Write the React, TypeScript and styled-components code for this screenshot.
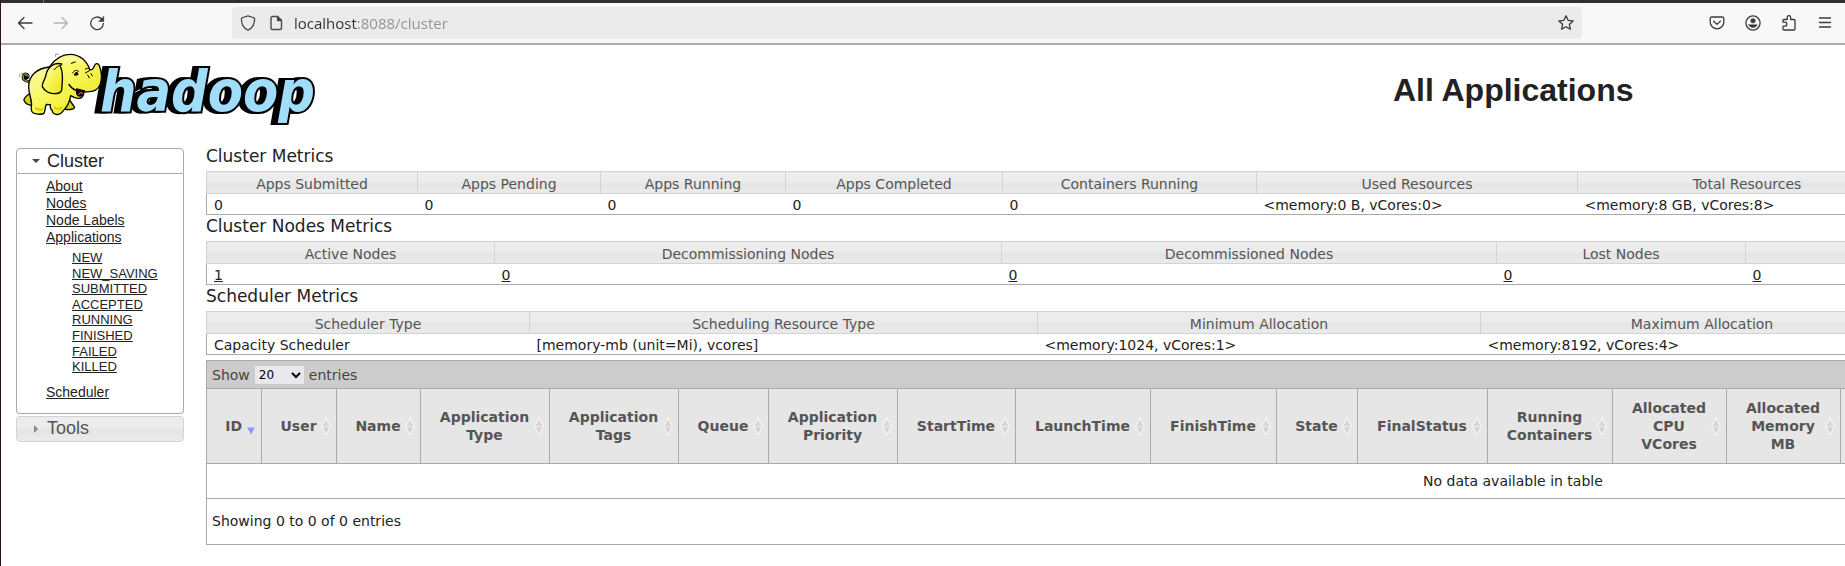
import React from "react";
import styled, { createGlobalStyle, css } from "styled-components";

const Global = createGlobalStyle`
  * { box-sizing: border-box; }
  body {
    margin: 0;
    background: #fff;
    color: #222;
    font-family: "DejaVu Sans", sans-serif;
    font-size: 14px;
    overflow: hidden;
  }
  a { color: inherit; }
`;

const Window = styled.div`
  min-height: 100vh;
  border-left: 1px solid #2c1226;
  overflow: hidden;
`;

/* ---------- browser toolbar ---------- */

const TabStrip = styled.div`
  height: 3px;
  padding-left: 42px;
  background: #302e2f;
`;

const TabDivider = styled.div`
  width: 1px;
  height: 3px;
  background: #777;
`;

const Toolbar = styled.nav`
  display: flex;
  align-items: center;
  height: 42px;
  padding: 0 4px 0 8px;
  background: #f8f8f8;
  border-bottom: 2px solid #ababab;
`;

const IconButton = styled.button<{ $faded?: boolean }>`
  display: grid;
  place-items: center;
  flex: none;
  width: 32px;
  height: 32px;
  padding: 0;
  border: 0;
  background: none;
  color: ${(p) => (p.$faded ? "#b4b4b4" : "#3a3a3a")};
`;

const ToolGroup = styled.div`
  display: flex;
  gap: 4px;
`;

const AddressBar = styled.div`
  display: flex;
  align-items: center;
  flex: 1;
  height: 32px;
  margin: 0 119px;
  background: #ebebeb;
  border-radius: 4px;
  color: #4a4a4a;
`;

const AddressBadge = styled.span`
  display: grid;
  place-items: center;
  width: 28px;
  &:first-child { margin-left: 2px; }
`;

const AddressInput = styled.input`
  flex: 1;
  min-width: 0;
  height: 32px;
  padding: 0 0 0 4px;
  border: 0;
  outline: 0;
  font: 15px "Open Sans", sans-serif;
  color: transparent;
  background: linear-gradient(90deg, #303030 67px, #919191 67px);
  background-clip: text;
  -webkit-background-clip: text;
`;

const Icon = ({ children, size = 16 }: { children: React.ReactNode; size?: number }) => (
  <svg
    width={size}
    height={size}
    viewBox="0 0 16 16"
    fill="none"
    stroke="currentColor"
    strokeWidth="1.3"
    strokeLinecap="round"
    strokeLinejoin="round"
    aria-hidden="true"
  >
    {children}
  </svg>
);

/* ---------- page header ---------- */

const Header = styled.header`
  display: grid;
  grid-template-columns: 205px minmax(0, 1fr);
  align-items: center;
  height: 90px;
`;

const Logo = styled.svg`
  display: block;
  align-self: start;
  width: 320px;
  height: 86px;
  margin-left: 9px;
  overflow: visible;
`;

const Wordmark = styled.text`
  font: italic bold 57px "DejaVu Sans Condensed", "DejaVu Sans", sans-serif;
  fill: #a0ddfb;
  stroke: #000;
  stroke-width: 4px;
  stroke-linejoin: miter;
  paint-order: stroke;
  filter: drop-shadow(-5px 0 0 #000);
`;

const Wide = styled.div`
  width: calc(160% - 8px);
`;

const Title = styled.h1`
  margin: 0;
  text-align: center;
  font: bold 32px "Liberation Sans", sans-serif;
`;

/* ---------- side navigation ---------- */

const Body = styled.div`
  display: grid;
  grid-template-columns: 168px minmax(0, 1fr);
  column-gap: 22px;
  padding: 10px 0 0 15px;
`;

const Side = styled.nav`
  display: flex;
  flex-direction: column;
  gap: 2px;
  margin-top: 3px;
  font: 14px "Liberation Sans", sans-serif;
`;

const gloss = css`
  background: linear-gradient(#ededed, #ebebeb 48%, #e4e4e4 52%, #ebebeb);
`;

const Section = styled.button<{ $open?: boolean }>`
  display: flex;
  align-items: center;
  gap: 6px;
  width: 100%;
  height: 26px;
  padding: 0 14px;
  border: 1px solid ${(p) => (p.$open ? "#aaa" : "#d3d3d3")};
  border-radius: ${(p) => (p.$open ? "4px 4px 0 0" : "4px")};
  font: 18px "Liberation Sans", sans-serif;
  color: ${(p) => (p.$open ? "#222" : "#555")};
  ${(p) => (p.$open ? "background: #fff;" : gloss)}
`;

const Panel = styled.div`
  padding: 4px 0 12px 29px;
  border: 1px solid #aaa;
  border-top: 0;
  border-radius: 0 0 4px 4px;
`;

const Links = styled.ul`
  margin: 0;
  padding: 0;
  list-style: none;
  line-height: 17px;
`;

const States = styled.ul`
  margin: 4px 0 9px;
  padding: 0 0 0 26px;
  list-style: none;
  font-size: 13px;
  line-height: 1.2;
`;

/* ---------- metrics ---------- */

const MetricsTitle = styled.h3`
  margin: 0;
  padding-bottom: 4px;
  font-size: 17px;
  font-weight: normal;
  line-height: 22px;
`;

const MetricsTable = styled.table`
  width: 100%;
  table-layout: fixed;
  border-collapse: collapse;
  border: 1px solid #aaa;
  th {
    height: 22px;
    padding: 2px 0 0;
    border: 1px solid #d3d3d3;
    color: #555;
    font-weight: normal;
    line-height: 18px;
    ${gloss}
  }
  td {
    height: 21px;
    padding: 1px 0 0 7px;
    line-height: 18px;
  }
`;

type Column = { label?: string; width?: number; value?: string };

const Metrics = ({ title, columns, linked }: { title: string; columns: Column[]; linked?: boolean }) => (
  <section>
    <MetricsTitle>{title}</MetricsTitle>
    <MetricsTable aria-label={title}>
      <colgroup>
        {columns.map((c, i) => <col key={i} width={c.width} />)}
      </colgroup>
      <thead>
        <tr>{columns.map((c, i) => <th key={i} scope="col">{c.label}</th>)}</tr>
      </thead>
      <tbody>
        <tr>
          {columns.map((c, i) => (
            <td key={i}>{linked ? <a href="#nodes">{c.value}</a> : c.value}</td>
          ))}
        </tr>
      </tbody>
    </MetricsTable>
  </section>
);

const clusterMetrics: Column[] = [
  { label: "Apps Submitted", width: 211, value: "0" },
  { label: "Apps Pending", width: 183, value: "0" },
  { label: "Apps Running", width: 185, value: "0" },
  { label: "Apps Completed", width: 217, value: "0" },
  { label: "Containers Running", width: 254, value: "0" },
  { label: "Used Resources", width: 321, value: "<memory:0 B, vCores:0>" },
  { label: "Total Resources", width: 339, value: "<memory:8 GB, vCores:8>" },
  {},
];

const nodeMetrics: Column[] = [
  { label: "Active Nodes", width: 288, value: "1" },
  { label: "Decommissioning Nodes", width: 507, value: "0" },
  { label: "Decommissioned Nodes", width: 495, value: "0" },
  { label: "Lost Nodes", width: 249, value: "0" },
  { value: "0" },
];

const schedulerMetrics: Column[] = [
  { label: "Scheduler Type", width: 323, value: "Capacity Scheduler" },
  { label: "Scheduling Resource Type", width: 508, value: "[memory-mb (unit=Mi), vcores]" },
  { label: "Minimum Allocation", width: 443, value: "<memory:1024, vCores:1>" },
  { label: "Maximum Allocation", width: 443, value: "<memory:8192, vCores:4>" },
  {},
];

/* ---------- applications table ---------- */

const Apps = styled.section`
  margin-top: 5px;
  border: 1px solid #aaa;
`;

const LengthBar = styled.div`
  display: flex;
  align-items: center;
  height: 27px;
  padding-left: 5px;
  background: #ccc;
  color: #444;
`;

const LengthLabel = styled.label`
  display: flex;
  align-items: center;
  gap: 5px;
`;

const LengthSelect = styled.select`
  width: 49px;
  height: 18px;
  border: 0;
  border-radius: 0;
  background: #e9e9ed;
  color: #000;
  font: 12px "DejaVu Sans", sans-serif;
`;

const AppsTable = styled.table`
  width: 100%;
  table-layout: fixed;
  border-collapse: collapse;
  th {
    height: 75px;
    padding: 0;
    border: 1px solid #aaa;
    border-left: 0;
    background: #e6e6e6;
  }
  td {
    height: 35px;
    padding: 0;
    border-bottom: 1px solid #aaa;
    text-align: center;
  }
`;

const SortButton = styled.button`
  display: grid;
  grid-template-columns: 17px minmax(0, 1fr) 17px;
  align-items: center;
  width: 100%;
  padding: 0;
  border: 0;
  background: none;
  color: #555;
  font: bold 14px "DejaVu Sans", sans-serif;
  line-height: 18px;
  svg { grid-column: 3; margin-left: 2px; }
`;

const Info = styled.p`
  margin: 0;
  padding-left: 5px;
  line-height: 45px;
`;

const SortIcon = ({ active }: { active?: boolean }) => (
  <svg width="10" height="19" viewBox="0 0 10 19" aria-hidden="true">
    {active ? (
      <path d="M1.200 10.500h7.600L5 17.500z" fill="#8f94ff" />
    ) : (
      <g>
        <path d="M5 1 9.300 9.500 5 18 .7 9.500z" fill="#d6d6d6" stroke="#fff" strokeWidth="0.9" />
        <path d="M1.500 9.500h7" stroke="#eee" />
      </g>
    )}
  </svg>
);

const appColumns: Column[] = [
  { label: "ID", width: 54 },
  { label: "User", width: 75 },
  { label: "Name", width: 84 },
  { label: "Application Type", width: 129 },
  { label: "Application Tags", width: 129 },
  { label: "Queue", width: 90 },
  { label: "Application Priority", width: 129 },
  { label: "StartTime", width: 118 },
  { label: "LaunchTime", width: 135 },
  { label: "FinishTime", width: 126 },
  { label: "State", width: 81 },
  { label: "FinalStatus", width: 130 },
  { label: "Running Containers", width: 125 },
  { label: "Allocated CPU VCores", width: 114 },
  { label: "Allocated Memory MB", width: 114 },
  {},
];

const appStates = ["NEW", "NEW_SAVING", "SUBMITTED", "ACCEPTED", "RUNNING", "FINISHED", "FAILED", "KILLED"];

const HadoopLogo = () => (
  <Logo viewBox="0 0 320 86" role="img" aria-label="hadoop">
    <Wordmark x="90" y="66">hadoop</Wordmark>
    <defs>
      <linearGradient id="skin" x1="0" y1="0" x2="1" y2="1">
        <stop offset="0.1" stopColor="#fdfdb0" />
        <stop offset="0.5" stopColor="#f7f556" />
        <stop offset="1" stopColor="#e8e213" />
      </linearGradient>
    </defs>
    <g transform="scale(0.3333)" stroke="#000" strokeWidth="4" strokeLinecap="round" strokeLinejoin="round" fill="none">
      <path d="M61 108C46 112 36 102 40 92c4-8 15-6 15 2 0 6-7 7-8 2" stroke="#000" strokeWidth="8" />
      <path d="M61 108C46 112 36 102 40 92c4-8 15-6 15 2" stroke="#e8e213" strokeWidth="3" />
      <path fill="#d9d300" d="M60 145C50 152 40 160 42 166c4 10 14 15 24 15zM172 155l22 32c-4 8-20 8-30 5z" />
      <path
        fill="url(#skin)"
        d="M118 66C82 70 56 90 56 125c0 24 12 42 8 60-2 12 2 20 12 21 9 2 21 2 26-1 4-9 3-18 7-27l12 1c-1 9 0 14 6 18 0 8 10 13 18 11 12-2 13-9 20-17 8-9 14-20 17-39 8 5 18 9 26 8 10-1 13-8 14-20 22 2 41-3 48-20 6-16 5-40-2-58-4-9-12-7-15 1-3 9-8 13-14 10C231 48 210 28 180 28c-28 0-48 18-62 38z"
      />
      <path d="M78 190c6 4 12 5 18 3M134 188c7 5 14 6 20 1" stroke="#d8d208" strokeWidth="7" />
      <path
        fill="url(#skin)"
        d="M155 57C130 50 112 68 108 90c-4 18-14 26-11 35 6 12 20 22 36 21 12 0 20-2 22-11 2-26 7-52-4-70"
      />
      <path d="M133 74c6-8 12-12 22-14" strokeWidth="3" />
      <path d="M188 84c4-8 12-10 18-5M226 72c6-2 9-3 12-1M226 84l14-8M233 90l5 9M243 86l4 7M184 55l12-4" strokeWidth="3" />
      <path d="M194 90c2-9 10-9 9-1z" fill="#000" />
      <path d="M177 118c10 18 30 24 46 19" strokeWidth="4" />
      <path d="M200 132c-2 14 2 22 10 21 8-1 12-8 10-16z" fill="#000" />
      <path d="M206 148c2-5 8-6 11-3" stroke="#e34b32" strokeWidth="4" />
      <path d="M28 96l2-9M34 88l3-6M136 34l2-7M138 27l8 1" stroke="#777" strokeWidth="2" />
      <path d="M164 50c16-14 40-12 52 6" stroke="#fff" strokeWidth="6" opacity="0.35" />
    </g>
  </Logo>
);

export default function App() {
  return (
    <Window>
      <Global />
      <TabStrip><TabDivider /></TabStrip>
      <Toolbar aria-label="Browser">
        <ToolGroup>
          <IconButton aria-label="Back"><Icon><path d="M15 8H1.500M7 2.500 1.500 8 7 13.500" /></Icon></IconButton>
          <IconButton aria-label="Forward" $faded><Icon><path d="M1 8h13.500M9 2.500 14.500 8 9 13.500" /></Icon></IconButton>
          <IconButton aria-label="Reload">
            <Icon>
              <path d="M14.300 8.500A6.300 6.300 0 1 1 12.600 4" />
              <path d="M14.800 1.500v5h-5z" fill="currentColor" strokeWidth="0.5" />
            </Icon>
          </IconButton>
        </ToolGroup>
        <AddressBar>
          <AddressBadge><Icon><path d="M8 .8 14.500 3c.4 5-1 9.500-6.500 12.200C2.500 12.500 1.100 8 1.500 3z" /></Icon></AddressBadge>
          <AddressBadge>
            <Icon>
              <path d="M9.500 1.500h-5A1.500 1.500 0 0 0 3 3v10a1.500 1.500 0 0 0 1.500 1.500h7.500a1.500 1.500 0 0 0 1.500-1.500V5.500z" strokeWidth="1.4" />
              <path d="M9.500 1.500v4h4z" fill="currentColor" />
            </Icon>
          </AddressBadge>
          <AddressInput aria-label="Address" defaultValue="localhost:8088/cluster" />
          <IconButton aria-label="Bookmark this page">
            <Icon><path d="m8 .8 2.100 4.500 5 .6-3.700 3.400 1 5-4.400-2.500-4.400 2.500 1-5L.9 5.900l5-.6z" /></Icon>
          </IconButton>
        </AddressBar>
        <ToolGroup>
          <IconButton aria-label="Save to Pocket">
            <Icon><path d="M2.500 2h11A1.300 1.300 0 0 1 14.800 3.300V7A6.800 6.800 0 0 1 1.200 7V3.300A1.300 1.300 0 0 1 2.500 2z" /><path d="M4.700 6.200 8 9.400l3.300-3.200" /></Icon>
          </IconButton>
          <IconButton aria-label="Account">
            <Icon>
              <circle cx="8" cy="8" r="7.100" />
              <circle cx="8" cy="5.800" r="2.300" fill="currentColor" strokeWidth="0.500" />
              <path d="M3.800 9.800h8.400c-.6 1.800-2.200 2.800-4.200 2.800s-3.600-1-4.200-2.800z" fill="currentColor" strokeWidth="0.500" />
            </Icon>
          </IconButton>
          <IconButton aria-label="Extensions">
            <Icon><path d="M2 7.200V5.500a1 1 0 0 1 1-1h3.200V2.300a1.700 1.700 0 0 1 3.400 0v2.200H13a1 1 0 0 1 1 1V14a1 1 0 0 1-1 1H3a1 1 0 0 1-1-1v-2.800h1.800a2 2 0 0 0 0-4z" /></Icon>
          </IconButton>
          <IconButton aria-label="Menu"><Icon><path d="M2.500 3h11M2.500 7.500h11M2.500 12h11" /></Icon></IconButton>
        </ToolGroup>
      </Toolbar>

      <Header>
        <HadoopLogo />
        <Wide><Title>All Applications</Title></Wide>
      </Header>

      <Body>
        <Side aria-label="Cluster navigation">
          <div>
            <Section $open aria-expanded="true">
              <svg width="10" height="10" viewBox="0 0 10 10" aria-hidden="true"><path d="M1 3h8L5 7z" fill="#454545" /></svg>
              Cluster
            </Section>
            <Panel>
              <Links>
                <li><a href="#about">About</a></li>
                <li><a href="#nodes">Nodes</a></li>
                <li><a href="#labels">Node Labels</a></li>
                <li>
                  <a href="#apps">Applications</a>
                  <States>
                    {appStates.map((s) => <li key={s}><a href={`#${s}`}>{s}</a></li>)}
                  </States>
                </li>
                <li><a href="#scheduler">Scheduler</a></li>
              </Links>
            </Panel>
          </div>
          <Section aria-expanded="false">
            <svg width="10" height="10" viewBox="0 0 10 10" aria-hidden="true"><path d="M3 1v8l4-4z" fill="#888" /></svg>
            Tools
          </Section>
        </Side>

        <main>
          <Wide>
            <Metrics title="Cluster Metrics" columns={clusterMetrics} />
            <Metrics title="Cluster Nodes Metrics" columns={nodeMetrics} linked />
            <Metrics title="Scheduler Metrics" columns={schedulerMetrics} />
            <Apps>
              <LengthBar>
                <LengthLabel>
                  Show
                  <LengthSelect defaultValue="20">
                    <option>20</option>
                    <option>40</option>
                    <option>60</option>
                    <option>80</option>
                    <option>100</option>
                  </LengthSelect>
                  entries
                </LengthLabel>
              </LengthBar>
              <AppsTable aria-label="Applications">
                <colgroup>
                  {appColumns.map((c, i) => <col key={i} width={c.width} />)}
                </colgroup>
                <thead>
                  <tr>
                    {appColumns.map((c, i) => (
                      <th key={i} scope="col">
                        {c.label && (
                          <SortButton>
                            <span />
                            <span>{c.label}</span>
                            <SortIcon active={i === 0} />
                          </SortButton>
                        )}
                      </th>
                    ))}
                  </tr>
                </thead>
                <tbody>
                  <tr><td colSpan={appColumns.length}>No data available in table</td></tr>
                </tbody>
              </AppsTable>
              <Info>Showing 0 to 0 of 0 entries</Info>
            </Apps>
          </Wide>
        </main>
      </Body>
    </Window>
  );
}
